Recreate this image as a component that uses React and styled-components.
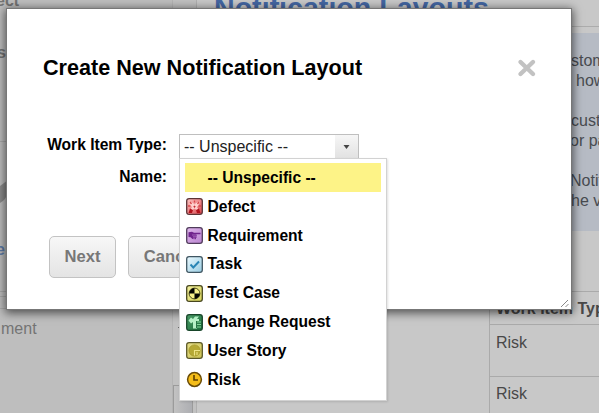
import React from 'react';
import styled, { createGlobalStyle } from 'styled-components';

const Global = createGlobalStyle`
  * { box-sizing: border-box; }
  html, body { margin: 0; padding: 0; overflow: hidden; }
  body { font-family: "Liberation Sans", Arial, sans-serif; font-size: 16px; color: #000; }
`;

const Page = styled.div`
  position: relative;
  display: grid;
  grid-template-columns: 172px 25px 1fr;
  width: 599px;
  height: 413px;
  overflow: hidden;
  background: #c8c8c8;
`;

const Sidebar = styled.aside`
  display: flex;
  flex-direction: column;
  background: #bebebe;
  color: #747474;
  overflow: hidden;
`;

const SideRow = styled.div`
  height: ${p => p.$h}px;
  flex: none;
  white-space: nowrap;
  line-height: 20px;
  padding-top: ${p => p.$top || 0}px;
  font-weight: ${p => (p.$bold ? 700 : 400)};
  color: ${p => p.$color || '#747474'};
  border-bottom: ${p => (p.$line ? '1px solid #a9a9a9' : '0')};
`;

const Shift = styled.span`
  display: block;
  margin-left: ${p => p.$x}px;
  margin-top: ${p => p.$y || 0}px;
`;

const Splitter = styled.div`
  display: flex;
  flex-direction: column;
  justify-content: flex-end;
  background: #c1c1c1;
  border-left: 1px solid #b4b4b4;
  border-right: 1px solid #b0b0b0;
`;

const SplitHandle = styled.div`
  height: 28px;
  width: 20px;
  background: linear-gradient(90deg, #c2c2c2, #adaeb2);
  border: 1px solid #9b9b9b;
  border-bottom: 0;
`;

const Tick = styled.div`
  width: 4px;
  height: 1px;
  margin: 0 0 57px 5px;
  background: #666;
`;

const Main = styled.main`
  display: flex;
  flex-direction: column;
  overflow: hidden;
`;

const Heading = styled.h1`
  flex: none;
  height: 27px;
  margin: 0;
  padding-left: 17px;
  border-bottom: 1px solid #acacac;
  color: #4467a3;
  font-size: 24px;
  line-height: 30px;
  white-space: nowrap;
  & > span { display: block; margin-top: -7px; font-size: 28.6px; }
`;

const Info = styled.section`
  flex: none;
  height: 198px;
  margin-top: 6px;
  padding: 18px 0 0;
  background: #b6bbc4;
  color: #484b50;
`;

const InfoLine = styled.div`
  height: 20px;
  line-height: 20px;
  white-space: nowrap;
  padding-left: ${p => p.$x}px;
`;

const Table = styled.div`
  flex: none;
  margin: 60px 0 0 292px;
  border-left: 1px solid #aaa;
  border-top: 1px solid #aaa;
  color: #484848;
`;

const Row = styled.div`
  height: ${p => p.$h}px;
  padding: ${p => p.$top}px 0 0 6px;
  line-height: 18px;
  white-space: nowrap;
  border-bottom: 1px solid #aaa;
  font-weight: ${p => (p.$head ? 700 : 400)};
`;

const Dialog = styled.div`
  position: absolute;
  left: 6px;
  top: 8px;
  width: 566px;
  height: 302px;
  padding: 44px 34px 0 36px;
  background: #fff;
  border: 1px solid #777;
  box-shadow: 0 2px 9px 1px rgba(0, 0, 0, 0.6);
`;

const TitleBar = styled.header`
  display: flex;
  align-items: center;
  justify-content: space-between;
  height: 30px;
`;

const Title = styled.h2`
  margin: 0;
  font-size: 21.6px;
  line-height: 30px;
`;

const CloseButton = styled.button`
  display: flex;
  margin-top: -1px;
  padding: 0;
  border: 0;
  background: none;
`;

const Form = styled.div`
  display: grid;
  grid-template-columns: 124px 180px;
  column-gap: 12px;
  grid-template-rows: 25px 32px;
  margin-top: 51px;
`;

const Label = styled.label`
  font-weight: 700;
  font-size: 15.6px;
  text-align: right;
  line-height: 20px;
  white-space: nowrap;
  padding-top: ${p => p.$top || 0}px;
`;

const Select = styled.div`
  position: relative;
  display: flex;
  height: 25px;
  border: 1px solid #bfbfbf;
  background: #fff;
`;

const SelectValue = styled.span`
  flex: 1;
  padding-left: 4px;
  line-height: 23px;
  color: #222;
`;

const SelectArrow = styled.span`
  display: flex;
  align-items: center;
  justify-content: center;
  width: 23px;
  padding-top: 1px;
  background: linear-gradient(#f6f6f6, #e2e2e2);
`;

const Menu = styled.ul`
  position: absolute;
  left: -1px;
  top: 23px;
  z-index: 2;
  width: 208px;
  height: 243px;
  margin: 0;
  padding: 4px 5px;
  list-style: none;
  background: #fff;
  border: 1px solid #d2d2d2;
  box-shadow: 1px 1px 2px rgba(0, 0, 0, 0.12);
`;

const Option = styled.li`
  display: flex;
  align-items: center;
  height: 28.85px;
  padding: 1px 0 0 1px;
  font-size: 15.6px;
  font-weight: 700;
  white-space: nowrap;
  background: ${p => (p.$active ? '#fdf387' : 'transparent')};
`;

const IconSlot = styled.span`
  display: flex;
  width: 21.5px;
  height: 17px;
`;

const Actions = styled.div`
  display: flex;
  gap: 12px;
  margin: 45px 0 0 6px;
`;

const Button = styled.button`
  width: ${p => p.$w}px;
  height: 42px;
  padding: 0;
  border: 1px solid #c3c3c3;
  border-radius: 5px;
  background: linear-gradient(#f7f7f7, #e4e4e4);
  color: #777;
  font: 700 16.6px "Liberation Sans", Arial, sans-serif;
`;

const Grip = styled.svg`
  position: absolute;
  right: 0;
  bottom: 0;
`;

function Tile({ id, from, to, stroke, children }) {
  return (
    <svg width="17" height="17" viewBox="0 0 17 17">
      <defs>
        <linearGradient id={id} x1="0" y1="0" x2="1" y2="1">
          <stop offset="0" stopColor={from} />
          <stop offset="1" stopColor={to} />
        </linearGradient>
      </defs>
      <rect x="0.7" y="0.7" width="15.6" height="15.6" rx="2.4" fill={`url(#${id})`} stroke={stroke} strokeWidth="1.3" />
      {children}
    </svg>
  );
}

const icons = {
  defect: (
    <Tile id="defect" from="#ffc6c3" to="#d9474e" stroke="#5c3336">
      <path d="M3 3.500 7 5l1.500 1.500L10 5l4-1.500-1.500 4L11 9l3 5-3.500-2-2-1.500-2 1.500L3 14l3-5-2-2Z" fill="#ffd0cd" />
      <path d="m4 4 1.500 2M13 4l-1.500 2M2 8h2.500M12.500 8H15M8.500 2.500v2" stroke="#d8494c" strokeWidth="1.300" />
      <path d="m2.500 15 1.500-4.500L7 12l-1 3ZM10 12l3-1.500 1.500 4.500H11Z" fill="#b3131d" />
      <path d="m7.300 8.500 1.200-1 1.200 1-1.200 1.500Z" fill="#c32930" />
    </Tile>
  ),
  requirement: (
    <Tile id="requirement" from="#dfb8ec" to="#b984cf" stroke="#503b5b">
      <path d="M2.500 5.200 6 4.700l2 1.100h6.500v1.500H10l.8.900-.5 1.100.4 1-.8.900v1L6.500 12l-2-1.700-2-.3Z" fill="#71258e" />
      <path d="M6 8h4M7 9.800h3M7 11.300h2" stroke="#c88bd8" strokeWidth=".6" />
    </Tile>
  ),
  task: (
    <Tile id="task" from="#ecfaff" to="#98cce2" stroke="#3f5662">
      <path d="m4.500 8.500 2.800 3L13 5.500" fill="none" stroke="#2985b5" strokeWidth="1.900" />
    </Tile>
  ),
  test: (
    <Tile id="test" from="#f2f0a0" to="#d6d258" stroke="#48471f">
      <circle cx="8.500" cy="8.500" r="5.400" fill="#f5ef88" stroke="#202000" strokeWidth=".8" />
      <path d="M8.500 8.500V3.100A5.400 5.400 0 0 0 3.100 8.500ZM8.500 8.500h5.400a5.400 5.400 0 0 1-5.400 5.400Z" fill="#050500" />
    </Tile>
  ),
  change: (
    <Tile id="change" from="#4b9a67" to="#1a703b" stroke="#174529">
      <path d="m2.500 6.500 2.500-3L7 5l2-2.500h4L11 5h2v2h-2v7.500H7V8L5 9.500Z" fill="#b6f1c7" />
      <path d="M11 8h4M11 10.500h4M11 13h4" stroke="#85d79d" strokeWidth="1.200" />
      <path d="M10.500 7v7" stroke="#267546" />
    </Tile>
  ),
  story: (
    <Tile id="story" from="#e6df8a" to="#cbc152" stroke="#5b5826">
      <circle cx="8.500" cy="8.500" r="5.600" fill="#b6a934" stroke="#a3972a" strokeWidth=".8" />
      <path d="M8.500 13.500v-5H14M11 10v3" fill="none" stroke="#eee487" strokeWidth="1.100" />
    </Tile>
  ),
  risk: (
    <svg width="17" height="17" viewBox="0 0 17 17">
      <circle cx="8.500" cy="8.500" r="6.900" fill="#f5bd18" stroke="#694b08" strokeWidth="1.500" />
      <path d="M8 4v5h4" fill="none" stroke="#604000" strokeWidth="1.600" />
    </svg>
  ),
};

const options = [
  ['-- Unspecific --', null],
  ['Defect', 'defect'],
  ['Requirement', 'requirement'],
  ['Task', 'task'],
  ['Test Case', 'test'],
  ['Change Request', 'change'],
  ['User Story', 'story'],
  ['Risk', 'risk'],
];

export default function App() {
  return (
    <>
      <Global />
      <Page>
        <Sidebar>
          <SideRow $h={43} $bold><Shift $x={-4} $y={-9}>ect</Shift></SideRow>
          <SideRow $h={99} $bold $line><Shift $x={-3}>s</Shift></SideRow>
          <SideRow $h={98} $top={38}>
            <svg width="8" height="26" viewBox="0 0 8 26"><path d="M0 6 8 0v12q-2 8-8 11Z" fill="#8c8c8c" /></svg>
          </SideRow>
          <SideRow $h={52} $bold $color="#5e7ba6" $line><Shift $x={-4}>e</Shift></SideRow>
          <SideRow $h={5} $line />
          <SideRow $h={12} $line />
          <SideRow $h={40} $top={10}><Shift $x={1}>ment</Shift></SideRow>
        </Sidebar>
        <Splitter>
          <Tick />
          <SplitHandle />
        </Splitter>
        <Main>
          <Heading><span>Notification Layouts</span></Heading>
          <Info>
            <InfoLine $x={374}>stom</InfoLine>
            <InfoLine $x={379}>how</InfoLine>
            <InfoLine $x={0} />
            <InfoLine $x={374}>cust</InfoLine>
            <InfoLine $x={373}>or pa</InfoLine>
            <InfoLine $x={0} />
            <InfoLine $x={373}>Notif</InfoLine>
            <InfoLine $x={374}>he v</InfoLine>
          </Info>
          <Table>
            <Row $h={33} $top={8} $head>Work Item Typ</Row>
            <Row $h={52} $top={9}>Risk</Row>
            <Row $h={52} $top={8}>Risk</Row>
          </Table>
        </Main>
        <Dialog>
          <TitleBar>
            <Title>Create New Notification Layout</Title>
            <CloseButton aria-label="Close">
              <svg width="20" height="20" viewBox="0 0 20 20">
                <path d="m3.500 4 12.500 12M16 4 3.500 16" stroke="#c2c2c2" strokeWidth="4.400" strokeLinecap="round" />
              </svg>
            </CloseButton>
          </TitleBar>
          <Form>
            <Label $top={1}>Work Item Type:</Label>
            <Select>
              <SelectValue>-- Unspecific --</SelectValue>
              <SelectArrow>
                <svg width="7" height="4" viewBox="0 0 7 4"><path d="M.5 0h6l-3 4Z" fill="#444" /></svg>
              </SelectArrow>
              <Menu>
                {options.map(([label, icon], i) => (
                  <Option key={label} $active={i === 0}>
                    <IconSlot>{icon && icons[icon]}</IconSlot>
                    {label}
                  </Option>
                ))}
              </Menu>
            </Select>
            <Label $top={8}>Name:</Label>
          </Form>
          <Actions>
            <Button $w={67}>Next</Button>
            <Button $w={86}>Cancel</Button>
          </Actions>
          <Grip width="11" height="11" viewBox="0 0 11 11">
            <path d="m1 9 7-7M5.500 9l3-3" stroke="#888" strokeWidth="1" />
          </Grip>
        </Dialog>
      </Page>
    </>
  );
}
